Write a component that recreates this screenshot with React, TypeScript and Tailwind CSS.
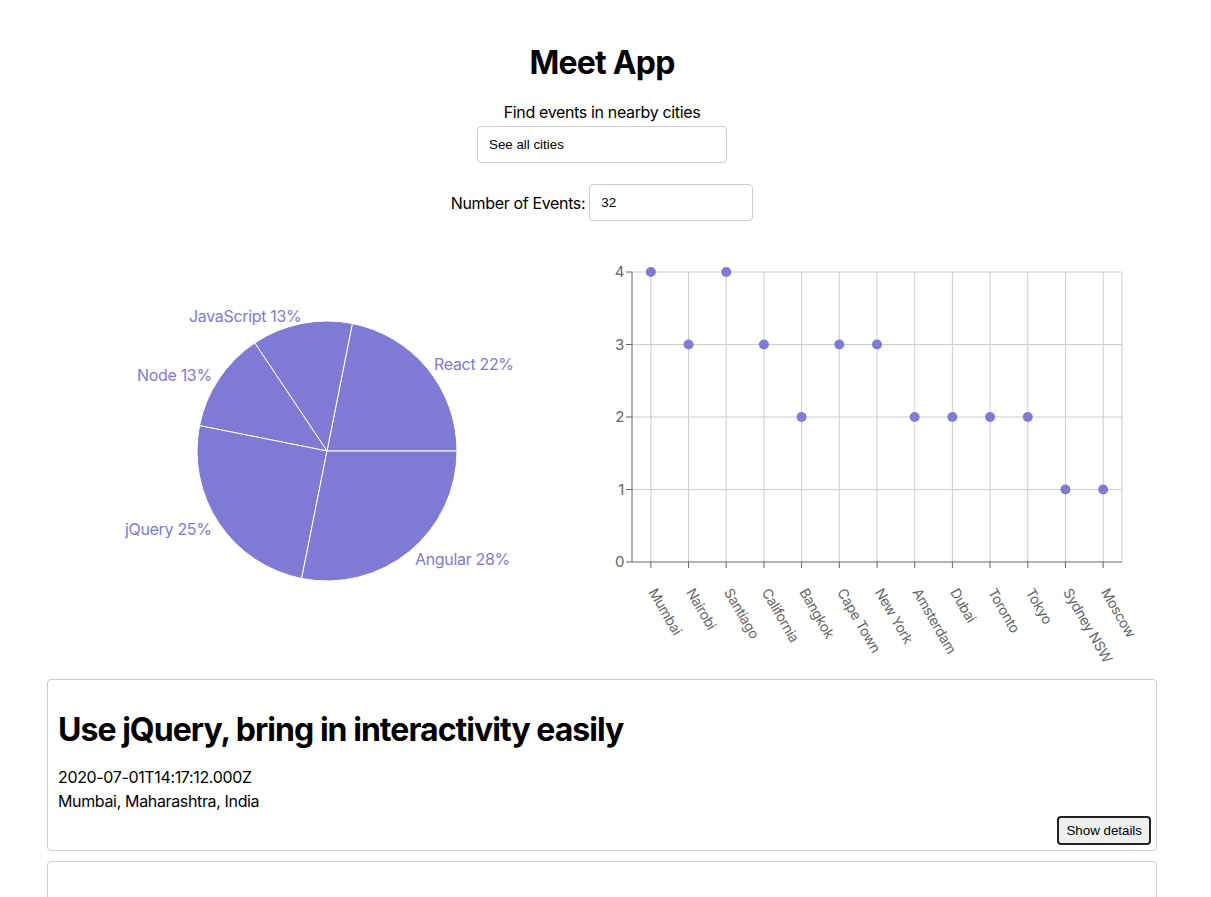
import React from "react";

const genres = [
  { name: "React", value: 7 },
  { name: "JavaScript", value: 4 },
  { name: "Node", value: 4 },
  { name: "jQuery", value: 8 },
  { name: "Angular", value: 9 },
];

// label spots read off the chart
const pieLabels = [
  { text: "React 22%", x: 434, y: 370 },
  { text: "JavaScript 13%", x: 189, y: 322 },
  { text: "Node 13%", x: 137, y: 381 },
  { text: "jQuery 25%", x: 125, y: 535 },
  { text: "Angular 28%", x: 415, y: 565 },
];

const cityCounts = [
  { city: "Mumbai", count: 4 },
  { city: "Nairobi", count: 3 },
  { city: "Santiago", count: 4 },
  { city: "California", count: 3 },
  { city: "Bangkok", count: 2 },
  { city: "Cape Town", count: 3 },
  { city: "New York", count: 3 },
  { city: "Amsterdam", count: 2 },
  { city: "Dubai", count: 2 },
  { city: "Toronto", count: 2 },
  { city: "Tokyo", count: 2 },
  { city: "Sydney NSW", count: 1 },
  { city: "Moscow", count: 1 },
];

const events = [
  {
    id: 1,
    summary: "Use jQuery, bring in interactivity easily",
    start: "2020-07-01T14:17:12.000Z",
    location: "Mumbai, Maharashtra, India",
  },
  {
    id: 2,
    summary: "Learn JavaScript",
    start: "2020-05-19T16:00:00+02:00",
    location: "London, UK",
  },
];

const PURPLE = "#7f7ad3";

function GenrePie() {
  // svg sits at page x=47, y=251
  const ox = 47;
  const oy = 251;
  const cx = 327 - ox;
  const cy = 451 - oy;
  const r = 130;
  const total = genres.reduce((s, g) => s + g.value, 0);
  let start = 0;
  const pt = (deg: number) => {
    const a = (deg * Math.PI) / 180;
    return [cx + r * Math.cos(a), cy - r * Math.sin(a)];
  };

  return (
    <svg width={560} height={400} className="shrink-0">
      {genres.map((g) => {
        const sweep = (g.value / total) * 360;
        const [x1, y1] = pt(start);
        const [x2, y2] = pt(start + sweep);
        const large = sweep > 180 ? 1 : 0;
        start += sweep;
        return (
          <path
            key={g.name}
            d={`M${cx},${cy} L${x1},${y1} A${r},${r} 0 ${large} 0 ${x2},${y2} Z`}
            fill={PURPLE}
            stroke="#fff"
            strokeWidth={1}
          />
        );
      })}
      {pieLabels.map((l) => (
        <text
          key={l.text}
          x={l.x - ox}
          y={l.y - oy}
          fill={PURPLE}
          fontSize={16}
          letterSpacing="-0.02em"
        >
          {l.text}
        </text>
      ))}
    </svg>
  );
}

function CityScatter() {
  // svg sits at page x=607, y=251
  const left = 632 - 607;
  const right = 1122 - 607;
  const top = 272 - 251;
  const bottom = 562 - 251;
  const band = (right - left) / cityCounts.length;
  const yOf = (v: number) => bottom - ((bottom - top) * v) / 4;
  const xOf = (i: number) => left + band * (i + 0.5);

  return (
    <svg width={550} height={420} className="shrink-0">
      {/* grid */}
      {[1, 2, 3, 4].map((v) => (
        <line key={v} x1={left} x2={right} y1={yOf(v)} y2={yOf(v)} stroke="#ccc" />
      ))}
      {cityCounts.map((c, i) => (
        <line key={c.city} x1={xOf(i)} x2={xOf(i)} y1={top} y2={bottom} stroke="#ccc" />
      ))}
      <line x1={right} x2={right} y1={top} y2={bottom} stroke="#ccc" />

      {/* axes */}
      <line x1={left} x2={left} y1={top} y2={bottom} stroke="#666" />
      <line x1={left} x2={right} y1={bottom} y2={bottom} stroke="#666" />
      {[0, 1, 2, 3, 4].map((v) => (
        <g key={v}>
          <line x1={left - 6} x2={left} y1={yOf(v)} y2={yOf(v)} stroke="#666" />
          <text x={left - 8} y={yOf(v)} dy="0.355em" textAnchor="end" fill="#666" fontSize={15}>
            {v}
          </text>
        </g>
      ))}
      {cityCounts.map((c, i) => {
        const x = xOf(i);
        const lx = x + 6;
        const ly = bottom + 25;
        return (
          <g key={c.city}>
            <line x1={x} x2={x} y1={bottom} y2={bottom + 6} stroke="#666" />
            <text
              x={lx}
              y={ly}
              dy="0.71em"
              textAnchor="start"
              fill="#666"
              fontSize={14}
              transform={`rotate(60 ${lx} ${ly})`}
            >
              {c.city}
            </text>
          </g>
        );
      })}

      {cityCounts.map((c, i) => (
        <circle key={c.city} cx={xOf(i)} cy={yOf(c.count)} r={5} fill={PURPLE} />
      ))}
    </svg>
  );
}

function EventCard({ event }: { event: (typeof events)[number] }) {
  return (
    <li className="rounded-[4px] border border-[#ccc] pb-[5px] pl-[10px] pr-[5px] pt-[31px]">
      <h2 className="text-[32px] font-bold leading-[38px] tracking-[-0.03em]">{event.summary}</h2>
      <p className="mt-[16px] text-base leading-6">{event.start}</p>
      <p className="text-base leading-6">{event.location}</p>
      <div className="mt-[3px] flex justify-end">
        <button className="h-[29px] rounded-[4px] border-2 border-[#222] bg-[#efefef] px-[7px] font-['Liberation_Sans',Arial,sans-serif] text-[13.333px] tracking-normal text-black">
          Show details
        </button>
      </div>
    </li>
  );
}

export default function App() {
  return (
    <div className="min-h-screen bg-white font-['Inter',sans-serif] tracking-[-0.022em] text-black">
      <div className="w-[1204px]">
        <div className="flex flex-col items-center pt-[44px]">
          <h1 className="text-[32px] font-bold leading-[38px] tracking-[-0.025em]">Meet App</h1>
          <label className="mt-[18px] text-base leading-6">Find events in nearby cities</label>
          <input
            className="mt-[2px] h-[37px] w-[250px] rounded-[4px] border border-[#ccc] px-[11px] font-['Liberation_Sans',Arial,sans-serif] text-[13.333px] tracking-normal outline-none"
            defaultValue="See all cities"
          />
          <div className="mt-[21px] flex items-center gap-[4px]">
            <label className="text-base leading-6">Number of Events:</label>
            <input
              className="h-[37px] w-[164px] rounded-[4px] border border-[#ccc] px-[11px] font-['Liberation_Sans',Arial,sans-serif] text-[13.333px] tracking-normal outline-none"
              defaultValue="32"
            />
          </div>
        </div>

        <div className="mx-[47px] mt-[30px] flex">
          <GenrePie />
          <CityScatter />
        </div>

        <ul className="mx-[47px] mt-[8px] flex flex-col gap-[10px] pb-6">
          {events.map((e) => (
            <EventCard key={e.id} event={e} />
          ))}
        </ul>
      </div>
    </div>
  );
}
